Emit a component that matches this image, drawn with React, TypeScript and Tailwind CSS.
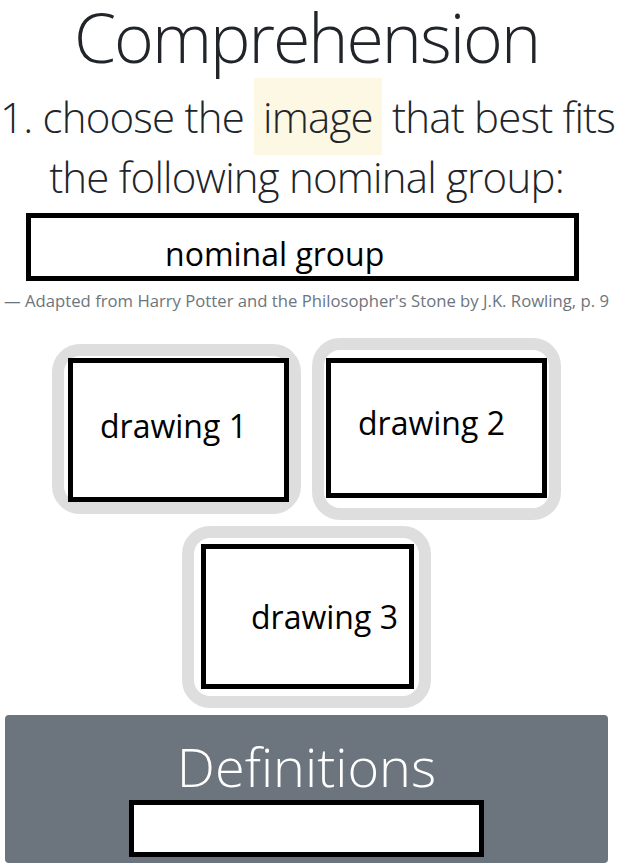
export default function App() {
  const light = { fontFamily: '"Open Sans", "Noto Sans", sans-serif' }
  return (
    <div className="w-[613px] bg-white text-[#212529]" style={light}>
      <h1 className="text-center text-[68px] font-light leading-[74px] tracking-[-2px]">Comprehension</h1>

      <p className="mt-[13px] text-center text-[42px] font-light leading-[60px] tracking-[-0.8px] whitespace-nowrap">
        1. choose the{" "}
        <mark className="bg-[#fcf8e3] px-[9px] py-[10px] text-[#212529]">image</mark> that best fits
        <br />
        the following nominal group:
      </p>

      {/* nominal group picture */}
      <div className="mt-[6px] ml-[26px] flex h-[68px] w-[553px] items-end border-[5px] border-black bg-white pb-[2px] pl-[134px]">
        <span className="text-[32px] leading-[40px] text-black">nominal group</span>
      </div>

      <p className="mt-[9px] pl-[4px] text-[16.7px] leading-[22px] text-[#6c757d] whitespace-nowrap">
        — Adapted from Harry Potter and the Philosopher's Stone by J.K. Rowling, p. 9
      </p>

      <div className="mt-[26px] flex flex-wrap items-center justify-center gap-x-[11px] gap-y-[6px]">
        <DrawingCard label="drawing 1" frame="h-[170px] pl-[4px] pt-[2px]" text="pl-[27px] pb-[8px]" />
        <DrawingCard label="drawing 2" frame="h-[182px] px-[2px] pt-[8px] pb-[10px]" text="pl-[27px] pb-[10px]" />
        <DrawingCard label="drawing 3" frame="h-[182px] pl-[7px] pr-[5px] pt-[6px] pb-[7px]" text="pl-[45px] pb-[0px]" />
      </div>

      <div className="mx-[5px] mt-[7px] flex h-[148px] flex-col items-center rounded-[4px] bg-[#6c757d] pt-[18px]">
        <h2 className="text-[54px] font-light leading-[66px] text-white">Definitions</h2>
        <div className="mt-[1px] h-[57px] w-[355px] border-[5px] border-black bg-white"></div>
      </div>
    </div>
  )
}

function DrawingCard({ label, frame, text }: { label: string; frame: string; text: string }) {
  return (
    <div className={`w-[249px] rounded-[28px] border-[12px] border-[#dedede] bg-white ${frame}`}>
      <div className={`flex h-full items-center border-[5px] border-black ${text}`}>
        <span className="text-[32px] leading-[40px] text-black">{label}</span>
      </div>
    </div>
  )
}
